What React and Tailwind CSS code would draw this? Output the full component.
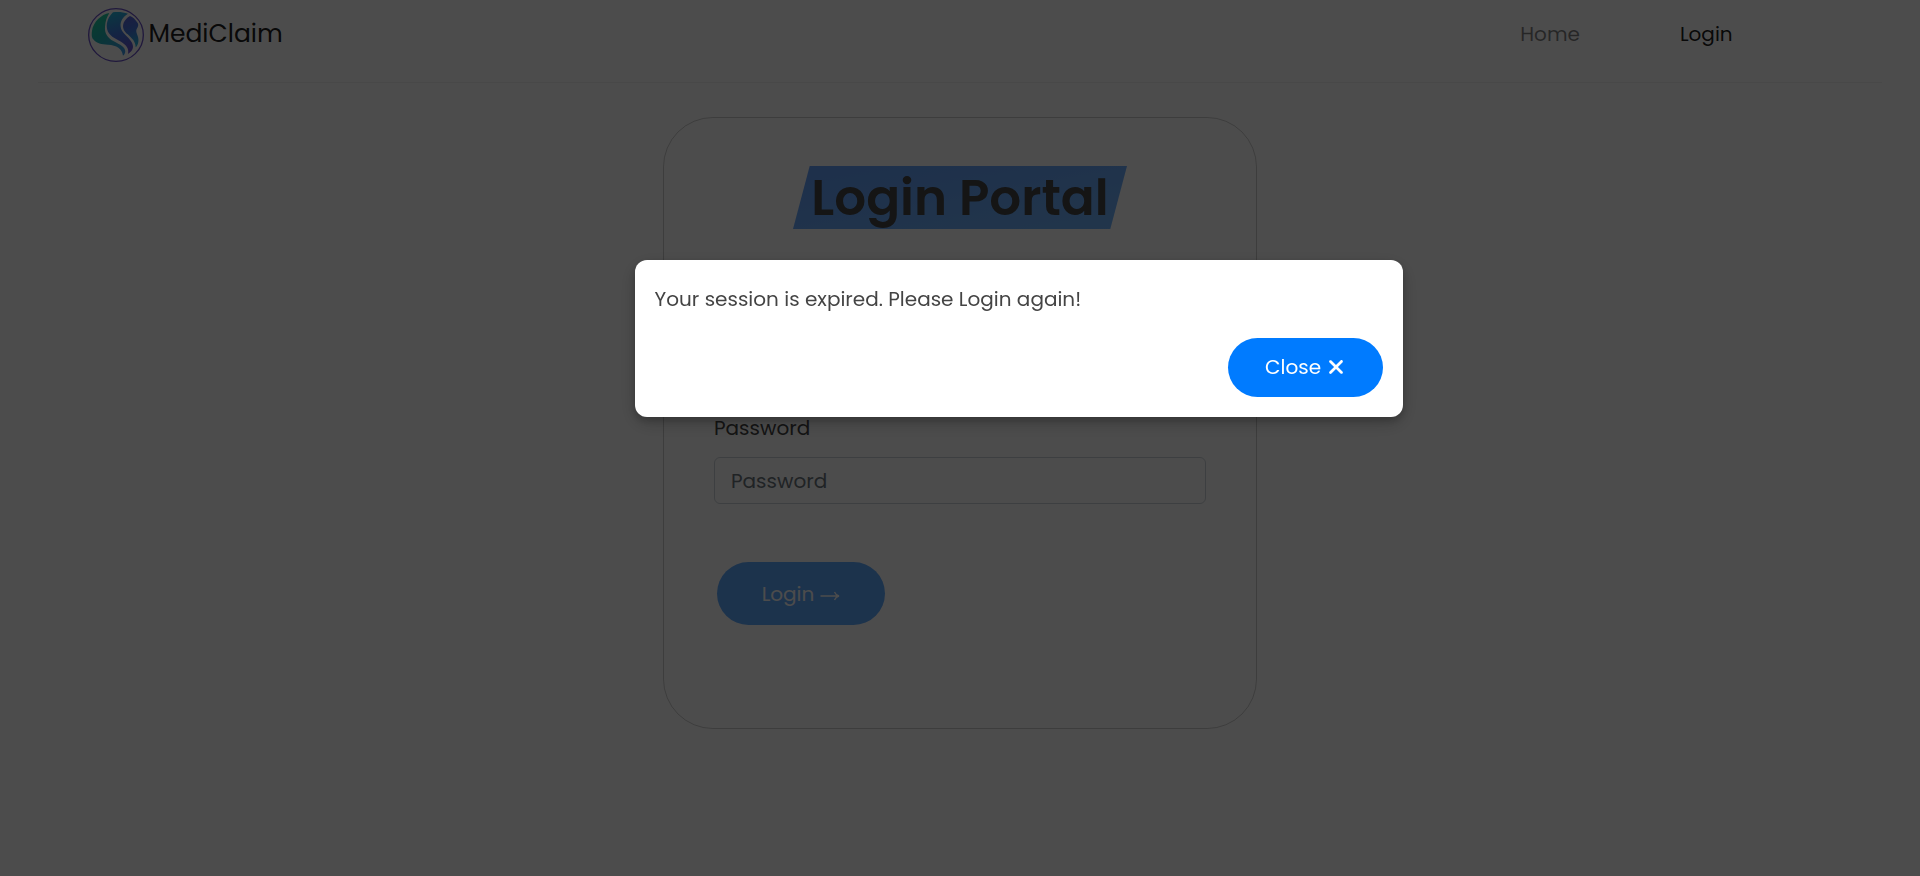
import { useState } from "react";
import { FaXmark } from "react-icons/fa6";

function Logo() {
  return (
    <svg className="h-[54px] w-14 shrink-0" viewBox="0 0 168 162" aria-hidden="true">
      <defs>
        <linearGradient id="leaf" x1="0.2" y1="0" x2="0.8" y2="1">
          <stop offset="0" stopColor="#1dcf9a" />
          <stop offset="0.45" stopColor="#20b5b5" />
          <stop offset="1" stopColor="#3f9be8" />
        </linearGradient>
        <linearGradient id="stem" x1="0.4" y1="0" x2="0.6" y2="1">
          <stop offset="0" stopColor="#26b4dc" />
          <stop offset="0.5" stopColor="#4478e0" />
          <stop offset="1" stopColor="#6a4fd0" />
        </linearGradient>
        <linearGradient id="edge" x1="0.3" y1="0" x2="0.5" y2="1">
          <stop offset="0" stopColor="#5a62d8" />
          <stop offset="0.5" stopColor="#4478e0" />
          <stop offset="1" stopColor="#26b4dc" />
        </linearGradient>
      </defs>
      <ellipse cx="84" cy="81" rx="82" ry="79" fill="none" stroke="#6b52c8" strokeWidth="4" />
      <path fill="url(#leaf)" d="M64 15C40 19 16 42 12 68C10 84 12 90 17 95C26 105 40 109 60 110C86 112 102 121 105 143C111 139 114 131 110 123C105 113 91 108 76 99C60 90 49 76 51 56C52 39 57 26 64 15Z" />
      <path fill="url(#stem)" d="M75 13C90 11 105 12 120 17C105 26 96 39 98 56C100 75 120 83 131 103C138 116 137 127 120 138C124 121 114 110 99 101C82 91 61 83 57 62C54 42 62 26 75 13Z" />
      <path fill="url(#edge)" d="M126 24C134 27 143 35 149 45C152 50 151 56 146 63C141 75 154 85 151 101C150 108 148 113 143 118C143 101 132 91 119 79C107 69 102 58 107 44C111 36 117 29 126 24Z" />
    </svg>
  );
}

function ArrowRight() {
  return (
    <svg className="mt-1 h-3 w-5" viewBox="0 0 20 12" fill="none" stroke="currentColor" strokeWidth="1.3" aria-hidden="true">
      <path d="M0.5 6H19M14.5 2C15.3 4 17 5.5 19 6C17 6.5 15.3 8 14.5 10" />
    </svg>
  );
}

function Header() {
  return (
    <header className="mx-[2%] border-b border-black/5">
      <nav className="flex h-[82px] items-start justify-between pr-[149px] pl-[50px]">
        <a href="#" className="mt-2 flex h-[54px] items-center gap-1 text-[25px] text-black/90">
          <Logo />
          <span className="pb-0.5">MediClaim</span>
        </a>
        <div className="mt-5 flex gap-[100px] text-xl leading-7">
          <a href="#" className="text-black/50">Home</a>
          <a href="#" className="text-black/90">Login</a>
        </div>
      </nav>
    </header>
  );
}

function LoginCard() {
  return (
    <main className="mx-auto mt-[34px] flex h-[612px] w-[594px] flex-col rounded-[50px] border border-black/20 px-[50px] pt-12">
      <h1 className="mx-auto flex h-[63px] w-[334px] items-center justify-center bg-linear-to-br from-[#649ffa] to-[#72b4fc] text-[50px] leading-[60px] font-semibold text-[#464646] [clip-path:polygon(5%_0,100%_0,95%_100%,0_100%)]">
        Login Portal
      </h1>
      <form className="mt-46 flex flex-col items-start" onSubmit={(e) => e.preventDefault()}>
        <label htmlFor="password" className="text-xl leading-[30px] text-[#444444]">Password</label>
        <input
          id="password"
          type="password"
          placeholder="Password"
          className="mt-3.5 h-[47px] w-full rounded-md border border-[#ced4da] px-4 text-xl placeholder:text-[#6c757d]"
        />
        <button type="submit" className="mt-[58px] ml-[3px] flex h-[63px] w-[168px] items-center justify-center gap-1.5 rounded-full bg-[#60aaff] text-xl text-white">
          Login <ArrowRight />
        </button>
      </form>
    </main>
  );
}

function SessionDialog({ onClose }) {
  return (
    <div className="fixed inset-0 bg-black/70">
      <section
        role="alertdialog"
        aria-modal="true"
        aria-labelledby="session-message"
        className="mt-[260px] ml-[33.05%] flex w-2/5 flex-col rounded-xl bg-white p-5 shadow-[0_4px_8px_rgba(0,0,0,0.2),0_6px_20px_rgba(0,0,0,0.19)]"
      >
        <p id="session-message" className="text-xl leading-[38px] text-[#444444]">
          Your session is expired. Please Login again!
        </p>
        <button
          type="button"
          onClick={onClose}
          className="mt-5 flex h-[59px] w-[155px] items-center justify-center gap-1 self-end rounded-full bg-[#007bff] pb-0.5 pl-0.5 text-xl text-white"
        >
          Close <FaXmark className="size-[22px]" />
        </button>
      </section>
    </div>
  );
}

export default function App() {
  const [expired, setExpired] = useState(true);
  return (
    <div className="min-h-screen bg-white font-['Poppins','Inter',sans-serif]">
      <Header />
      <LoginCard />
      {expired && <SessionDialog onClose={() => setExpired(false)} />}
    </div>
  );
}
